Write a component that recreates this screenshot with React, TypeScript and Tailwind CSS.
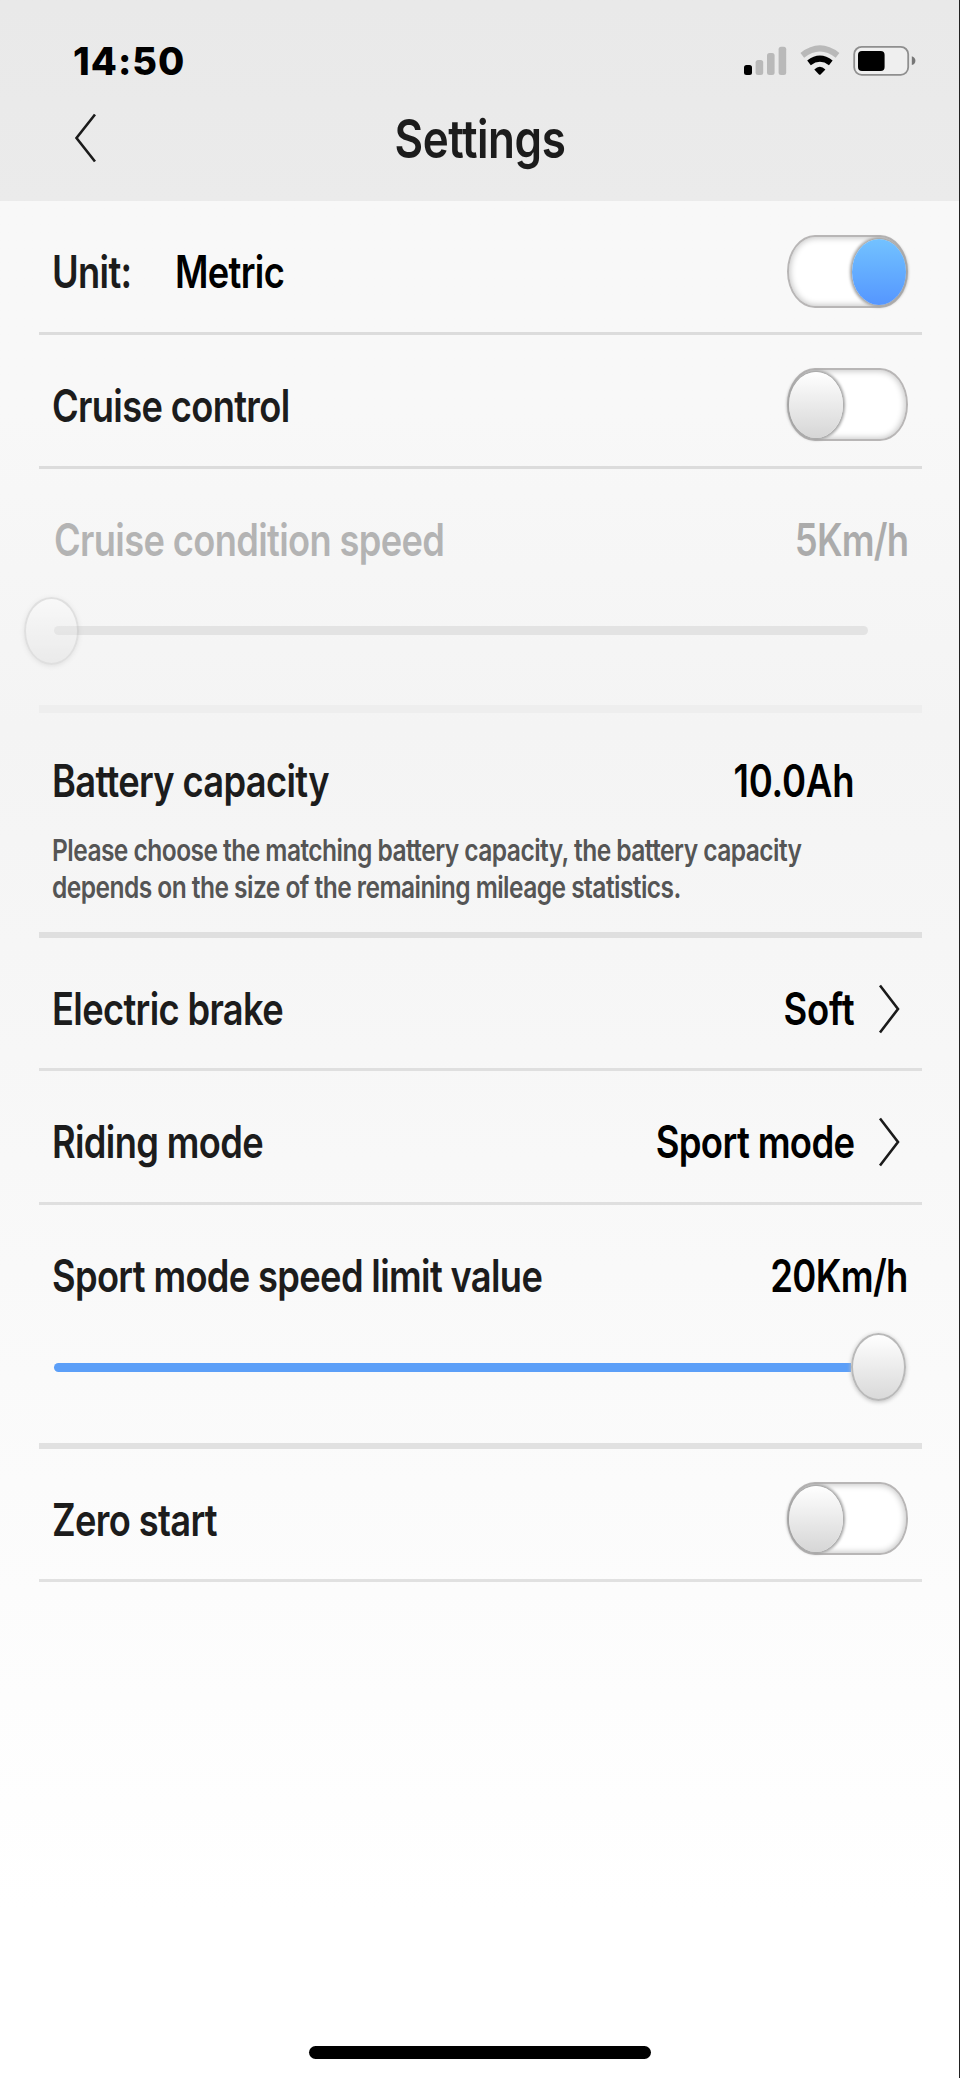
import type { ReactNode } from "react";

function StatusBar() {
  return (
    <div className="flex h-[120px] items-start justify-between pl-[73px] pr-[43px] pt-[45px]">
      <span className="text-[38px] font-extrabold leading-[33px] tracking-[1px] text-black">14:50</span>
      <svg width="174" height="32" viewBox="742 45 174 32">
        <rect x="744" y="65" width="8" height="10" rx="2.5" fill="#000" />
        <rect x="755.6" y="60" width="7.6" height="15" rx="2.5" fill="#b9b9b9" />
        <rect x="767" y="53" width="7.6" height="22" rx="2.5" fill="#b9b9b9" />
        <rect x="778.6" y="46.7" width="7.6" height="28.3" rx="2.5" fill="#b9b9b9" />
        <g fill="none">
          <path d="M802.3 55.3Q820 41.5 837.5 55.3" stroke="#b9b9b9" strokeWidth="6" />
          <path d="M809 62.8Q820 54.6 830.8 62.8" stroke="#000" strokeWidth="6" />
        </g>
        <path d="M814.3 69.5Q819.8 63.8 825.4 69.5L820.6 74.5Q819.8 75.2 819 74.5Z" fill="#000" />
        <rect x="854.2" y="46.8" width="54" height="28" rx="7.5" fill="#efefef" stroke="#8f8f8f" strokeWidth="1.8" />
        <rect x="858" y="51" width="26.6" height="20" rx="4" fill="#000" />
        <path d="M911.8 56.3q3.6 1.2 3.6 4.4t-3.6 4.4z" fill="#777" />
      </svg>
    </div>
  );
}

function ChevronRight() {
  return (
    <svg className="mt-0.5" width="22" height="50" viewBox="0 0 22 50" fill="none" stroke="#1b1b1b" strokeWidth="2.6">
      <path d="M2 1.5L20 25L2 48.5" />
    </svg>
  );
}

function Toggle({ on = false }: { on?: boolean }) {
  return (
    <div
      className={`flex h-[73px] w-[121px] items-center rounded-[28px/36.5px] border-2 border-[#b8b6b6] bg-white shadow-[inset_0_0_6px_1px_#c4c4c4] ${
        on ? "justify-end" : "justify-start"
      }`}
    >
      <div
        className={`h-[66px] w-[54px] rounded-[50%] shadow-[0_0_3px_2px_#a0a0a0] ${
          on ? "bg-linear-to-b from-[#73c2ff] to-[#5596ff]" : "bg-linear-to-b from-white to-[#d6d6d6]"
        }`}
      />
    </div>
  );
}

function Thumb() {
  return (
    <div className="h-[68px] w-[55px] rounded-[50%] border-2 border-[#b9b9b9] bg-linear-to-b from-white to-[#d9d9d9] shadow-[0_1px_4px_#bdbdbd]" />
  );
}

function Label({ children, className = "" }: { children: ReactNode; className?: string }) {
  return (
    <span
      className={`origin-left scale-x-[0.815] whitespace-nowrap text-[44.5px] font-semibold leading-[54px] tracking-[-0.018em] text-[#1c1c1c] ${className}`}
    >
      {children}
    </span>
  );
}

function Value({ children, className = "tracking-[-0.018em]" }: { children: ReactNode; className?: string }) {
  return (
    <span
      className={`origin-right scale-x-[0.82] whitespace-nowrap text-[44.5px] font-semibold leading-[54px] text-black ${className}`}
    >
      {children}
    </span>
  );
}

export default function App() {
  return (
    <main className="flex h-[2078px] w-[960px] flex-col overflow-hidden border-r border-[#222] bg-linear-to-b from-[#f8f8f8] from-[20%] via-[#f4f4f4] via-[35%] to-white to-[92%] font-[Inter,'Liberation_Sans',sans-serif]">
      <header className="h-[201px] shrink-0 bg-linear-to-b from-[#e9e9e9] to-[#ebebeb]">
        <StatusBar />
        <div className="flex items-start justify-between pl-[74px] pr-[74px]">
          <svg className="-mt-[7px]" width="22" height="50" viewBox="0 0 22 50" fill="none" stroke="#1b1b1b" strokeWidth="2.6">
            <path d="M21 1.5L2.5 25L21 48.5" />
          </svg>
          <h1 className="-mt-[13px] scale-x-[0.83] text-[53px] font-semibold leading-[64px] tracking-[-0.01em] text-[#1c1c1c]">
            Settings
          </h1>
          <span className="w-[22px]" />
        </div>
      </header>

      <section className="ml-[39px] mr-[37px] flex flex-col">
        <div className="flex h-[134px] items-start justify-between border-b-3 border-[#dcdcdc] pl-[13px] pr-[14px] pt-[34px]">
          <div className="flex pt-[10px]">
            <Label className="w-[123px]">Unit:</Label>
            <Label className="text-black">Metric</Label>
          </div>
          <Toggle on />
        </div>

        <div className="flex h-[134px] items-start justify-between border-b-3 border-[#dcdcdc] pl-[13px] pr-[14px] pt-[33px]">
          <Label className="mt-[11px]">Cruise control</Label>
          <Toggle />
        </div>

        <div className="h-[244px] border-b-8 border-[#eeeeee] pl-[15px] pr-[14px] pt-[44px]">
          <div className="flex justify-between opacity-30">
            <Label>Cruise condition speed</Label>
            <Value className="tracking-[-0.024em]">5Km/h</Value>
          </div>
          <div className="mt-[30px] flex h-[67px] items-center">
            <div className="h-[9px] w-[814px] rounded-full bg-[#e3e3e3]" />
            <div className="-ml-[844px] opacity-35">
              <Thumb />
            </div>
          </div>
        </div>

        <div className="h-[225px] border-b-6 border-[#dfdfdf] pl-[13px] pr-[68px] pt-[41px]">
          <div className="flex justify-between">
            <Label>Battery capacity</Label>
            <Value className="tracking-[-0.006em]">10.0Ah</Value>
          </div>
          <p className="mt-[24px] w-[960px] origin-left scale-x-[0.818] text-[30px] font-semibold leading-[36.5px] tracking-[-0.022em] text-[#555]">
            Please choose the matching battery capacity, the battery capacity
            <br />
            depends on the size of the remaining mileage statistics.
          </p>
        </div>

        <div className="flex h-[133px] items-start justify-between border-b-3 border-[#dfdfdf] pl-[13px] pr-[22px] pt-[44px]">
          <Label>Electric brake</Label>
          <div className="flex gap-6">
            <Value className="tracking-[-0.006em]">Soft</Value>
            <ChevronRight />
          </div>
        </div>

        <div className="flex h-[134px] items-start justify-between border-b-3 border-[#dfdfdf] pl-[13px] pr-[22px] pt-[44px]">
          <Label>Riding mode</Label>
          <div className="flex gap-6">
            <Value>Sport mode</Value>
            <ChevronRight />
          </div>
        </div>

        <div className="h-[244px] border-b-6 border-[#e1e1e1] pl-[13px] pr-[14px] pt-[44px]">
          <div className="flex justify-between">
            <Label>Sport mode speed limit value</Label>
            <Value>20Km/h</Value>
          </div>
          <div className="mt-[30px] flex items-center pl-[2px]">
            <div className="h-[9px] w-[797px] rounded-l-full bg-[#5c9ff8]" />
            <Thumb />
          </div>
        </div>

        <div className="flex h-[133px] items-start justify-between border-b-3 border-[#e1e1e1] pl-[13px] pr-[14px] pt-[33px]">
          <Label className="mt-[11px]">Zero start</Label>
          <Toggle />
        </div>
      </section>

      <div className="mb-[19px] mt-auto h-[13px] w-[342px] self-center rounded-full bg-black" />
    </main>
  );
}
